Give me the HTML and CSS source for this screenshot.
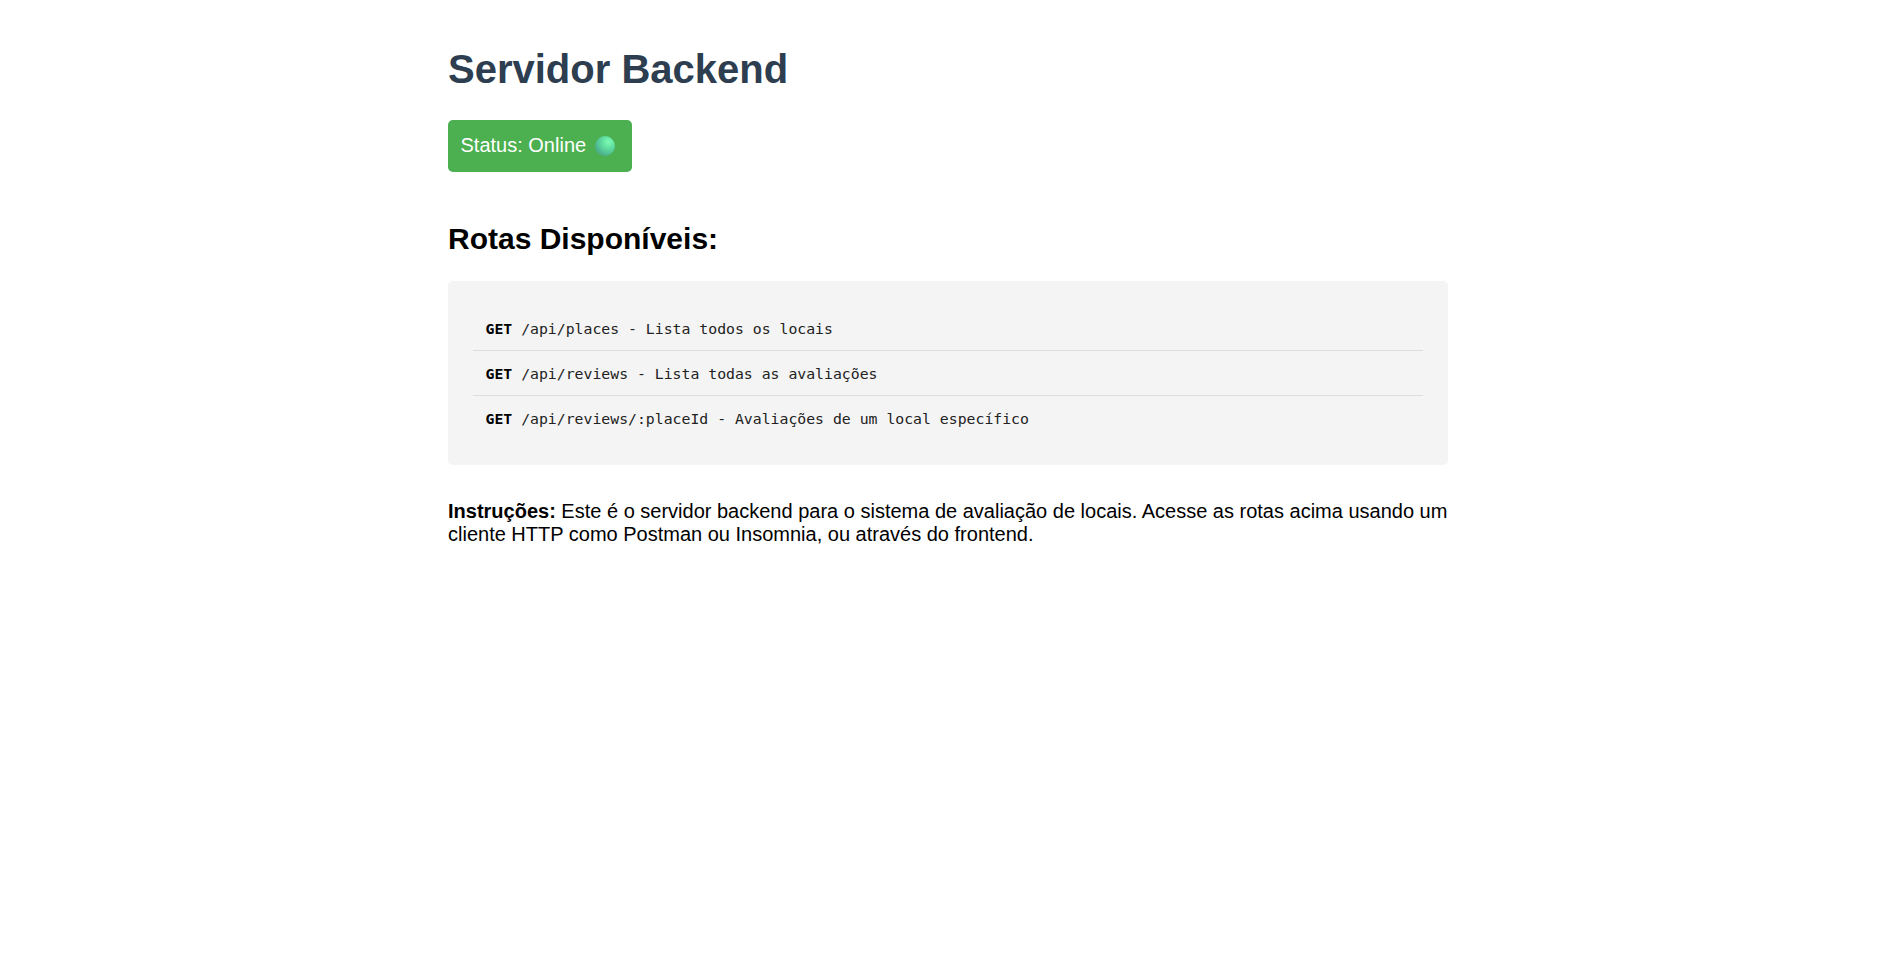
FILE: index.html
```html
<!DOCTYPE html>
<html lang="pt-BR">
<head>
<meta charset="utf-8">
<title>Servidor Backend</title>
<link rel="stylesheet" href="styles.css">
</head>
<body>
<div class="page">
  <h1 class="title">Servidor Backend</h1>
  <div class="status">Status: Online <span class="dot"></span></div>
  <h2 class="subtitle">Rotas Disponíveis:</h2>
  <div class="routes">
    <ul class="route-list">
      <li class="route"><code><strong>GET</strong> /api/places - Lista todos os locais</code></li>
      <li class="route"><code><strong>GET</strong> /api/reviews - Lista todas as avaliações</code></li>
      <li class="route"><code><strong>GET</strong> /api/reviews/:placeId - Avaliações de um local específico</code></li>
    </ul>
  </div>
  <p class="info"><strong>Instruções:</strong> Este é o servidor backend para o sistema de avaliação de locais. Acesse as rotas acima usando um cliente HTTP como Postman ou Insomnia, ou através do frontend.</p>
</div>
</body>
</html>
```

FILE: styles.css
```css
body {
  margin: 0;
  background: #ffffff;
  font-family: "Liberation Sans", Arial, sans-serif;
  color: #000000;
}

.page {
  width: 1000px;
  margin: 0 auto;
  padding: 20px 1px 20px 0;
}

.title {
  font-size: 40px;
  line-height: 46px;
  font-weight: bold;
  color: #2c3e50;
  margin: 26px 0 27.5px;
}

.status {
  display: flex;
  align-items: center;
  gap: 9px;
  width: fit-content;
  padding: 14.5px 16.5px 14.5px 12.5px;
  background: #4caf50;
  color: #ffffff;
  font-size: 20px;
  line-height: 23px;
  border-radius: 5px;
}

.dot {
  width: 20px;
  height: 20px;
  border-radius: 50%;
  background: radial-gradient(circle at 68% 30%, #7dfcb4 0%, #5fdc9f 35%, #4fb991 65%, #4a8f86 100%);
}

.subtitle {
  font-size: 30px;
  line-height: 34px;
  font-weight: bold;
  margin: 50px 0 25.5px;
}

.routes {
  background: #f4f4f4;
  border-radius: 5px;
  padding: 25px;
}

.route-list {
  list-style: none;
  margin: 0;
  padding: 0;
}

.route {
  padding: 12.5px;
  line-height: 19px;
  border-bottom: 1px solid #dddddd;
}

.route:last-child {
  border-bottom: none;
}

.route code {
  font-family: "DejaVu Sans Mono", monospace;
  font-size: 14.8px;
  color: #222222;
}

.route strong {
  color: #000000;
}

.info {
  font-size: 20px;
  line-height: 23px;
  margin: 35px 0 0;
}
```
